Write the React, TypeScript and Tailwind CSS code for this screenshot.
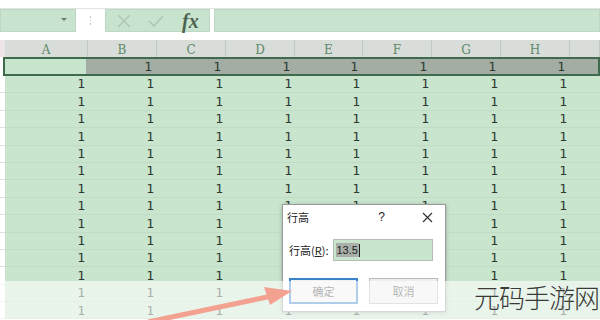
import React from "react";

const cols = ["A", "B", "C", "D", "E", "F", "G", "H", ""];
const widths = [83, 69, 69, 69, 68, 69, 69, 69, 30];

export default function App() {
  const rows = Array.from({ length: 14 });
  return (
    <div className="relative w-[600px] h-[320px] overflow-hidden bg-white" style={{ fontFamily: '"Liberation Sans", "Noto Sans CJK SC", sans-serif' }}>
      {/* top strip */}
      <div className="h-[9px] border-b border-[#e2e2e2] bg-white" />
      {/* toolbar */}
      <div className="flex h-[23px] items-stretch bg-white">
        <div className="relative w-[76px] bg-[#c9e4ce] border border-[#bfd8c3]">
          <div className="absolute right-[8px] top-[8px] w-0 h-0 border-l-[3px] border-r-[3px] border-t-[3px] border-l-transparent border-r-transparent border-t-[#6b7a6e]" />
        </div>
        <div className="w-[29px] flex items-center justify-center">
          <div className="flex flex-col gap-[2px]">
            <div className="w-[1.5px] h-[1.5px] bg-[#b9c8bc]" />
            <div className="w-[1.5px] h-[1.5px] bg-[#b9c8bc]" />
            <div className="w-[1.5px] h-[1.5px] bg-[#b9c8bc]" />
          </div>
        </div>
        <div className="w-[105px] bg-[#c9e4ce] border border-[#bfd8c3] flex items-center">
          <svg width="16" height="16" viewBox="0 0 16 16" className="ml-[10px]">
            <path d="M2 2 L14 14 M14 2 L2 14" stroke="#aec8b3" strokeWidth="1.6" fill="none" />
          </svg>
          <svg width="18" height="16" viewBox="0 0 18 16" className="ml-[15px]">
            <path d="M2 8 L7 13 L16 3" stroke="#aec8b3" strokeWidth="1.6" fill="none" />
          </svg>
          <span className="ml-[17px] text-[20px] italic font-bold leading-none text-[#4d6452]" style={{ fontFamily: '"Liberation Serif", serif' }}>fx</span>
        </div>
        <div className="w-[4px]" />
        <div className="flex-1 bg-[#c9e4ce] border border-[#bfd8c3]" />
      </div>
      <div className="h-[8px] bg-white" />
      {/* header row */}
      <div className="flex h-[17px] bg-[#d9ddd9]">
        <div className="w-[5px] bg-[#ece4e6]" />
        {cols.map((c, i) => (
          <div key={i} className="flex items-end justify-center pb-[0px] border-r border-[#c2c8c3] text-[12px] leading-[14px] text-[#5e8a6a]" style={{ width: widths[i], fontFamily: '"DejaVu Serif", serif' }}>
            {c}
          </div>
        ))}
      </div>
      {/* selected row */}
      <div className="flex h-[19px]">
        <div className="w-[5px] bg-white" />
        <div className="flex flex-1 border-2 border-[#3f6a4d]">
          {widths.map((w, i) => (
            <div key={i} className={`flex items-center justify-end pr-[3px] text-[13px] text-[#2e3a31] ${i === 0 ? "bg-[#c7e4cd]" : "bg-[#a3ada4]"}`} style={{ width: i === 0 ? w - 2 : w, fontFamily: '"DejaVu Sans Mono", monospace' }}>
              {i === 0 || i === 8 ? "" : "1"}
            </div>
          ))}
        </div>
      </div>
      {/* data rows */}
      {rows.map((_, r) => (
        <div key={r} className="flex h-[17.4px]">
          <div className="w-[5px] bg-white border-b border-[#e4dede]" />
          {widths.map((w, i) => (
            <div key={i} className="flex items-center justify-end pr-[3px] text-[13px] text-[#2e3a31] bg-[#c9e5ce] border-b border-[#bfdcc4]" style={{ width: w, fontFamily: '"DejaVu Sans Mono", monospace' }}>
              {i === 8 ? "" : "1"}
            </div>
          ))}
        </div>
      ))}

      {/* dialog */}
      <div className="absolute left-[282px] top-[204px] w-[164px] h-[108px] bg-white border border-[#9a9a9a] shadow-[0_1px_4px_rgba(0,0,0,0.25)]" style={{ fontFamily: '"Noto Sans CJK SC", sans-serif' }}>
        <div className="flex items-center h-[24px] pl-[4px] pr-[12px] text-[11px] text-[#222]">
          <span>行高</span>
          <span className="ml-auto mr-[37px] text-[12px]" style={{ fontFamily: '"Liberation Sans", sans-serif' }}>?</span>
          <svg width="11" height="11" viewBox="0 0 11 11">
            <path d="M1 1 L10 10 M10 1 L1 10" stroke="#333" strokeWidth="1.2" />
          </svg>
        </div>
        <div className="flex items-center mt-[10px] pl-[6px] h-[22px]">
          <span className="text-[11px] text-[#222]">行高(<span className="underline">R</span>):</span>
          <div className="ml-[4px] w-[100px] h-[22px] bg-[#c9e5ce] border border-[#b5bdb7] flex items-center pl-[2px]">
            <span className="bg-[#a9b0aa] text-[11px] text-[#222] px-[1px] leading-[14px]" style={{ fontFamily: '"Liberation Sans", sans-serif' }}>13.5</span>
            <span className="w-[1px] h-[13px] bg-[#222]" />
          </div>
        </div>
        <div className="flex gap-[11px] mt-[17px] pl-[6px]">
          <div className="w-[69px] h-[26px] border-2 border-[#3b83c8] flex items-center justify-center text-[11px] text-[#444] bg-[#f0f0f0]">确定</div>
          <div className="w-[69px] h-[26px] border border-[#b9b9b9] flex items-center justify-center text-[11px] text-[#444] bg-[#eeeeee]">取消</div>
        </div>
      </div>

      {/* watermark overlay band */}
      <div className="absolute left-0 right-0 top-[281px] bottom-0 bg-white/60" />
      {/* arrow */}
      <svg className="absolute left-0 top-0" width="600" height="320" viewBox="0 0 600 320">
        <path d="M148 322 L272 296" stroke="#f3a191" strokeWidth="5" fill="none" />
        <path d="M292 291 L264 287 L270 305 Z" fill="#f3a191" />
      </svg>
      <div className="absolute left-[474px] top-[284px] text-[26px] leading-none text-[#3a3a3a] tracking-[-1px]" style={{ fontFamily: '"Noto Sans CJK SC", sans-serif', fontWeight: 300 }}>元码手游网</div>
    </div>
  );
}
